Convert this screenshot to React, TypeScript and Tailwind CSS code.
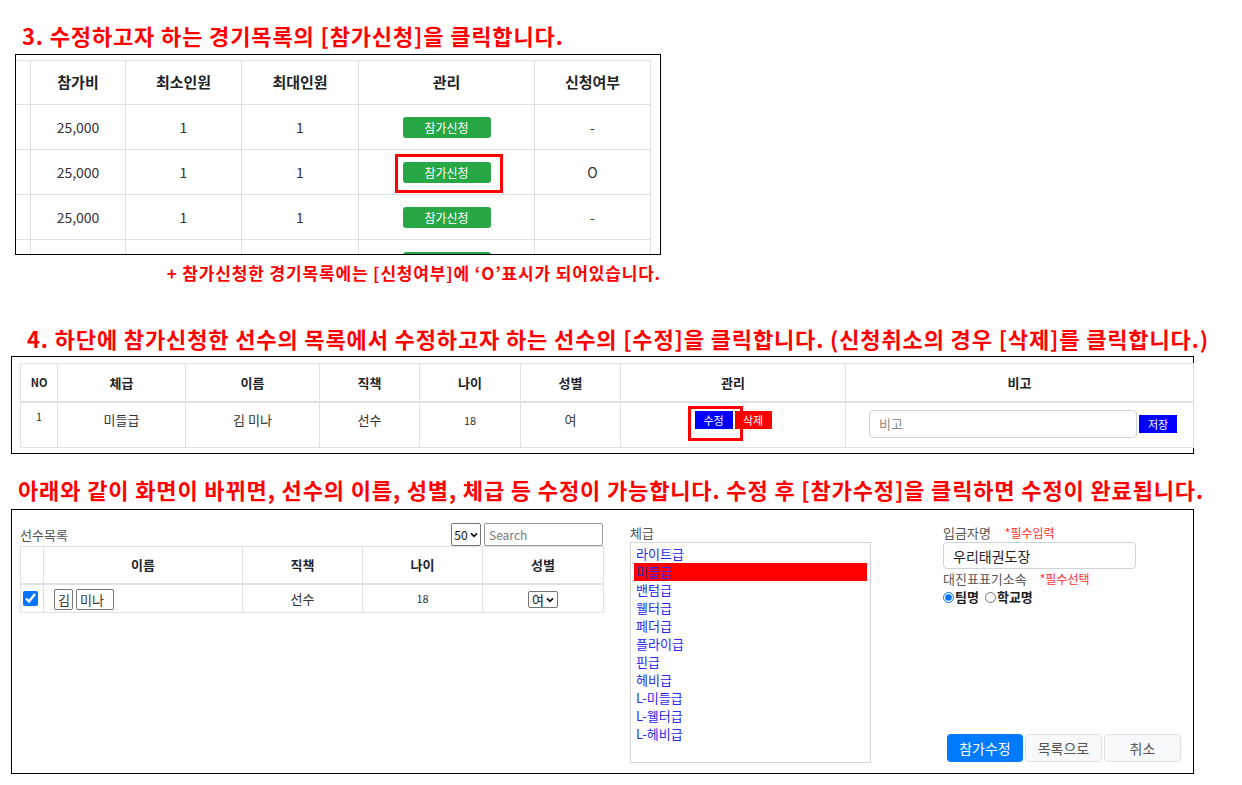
import type { FC, ReactNode } from 'react';

type Game = { fee: string; min: string; max: string; applied: string; focus?: boolean; cut?: boolean };

const games: Game[] = [
  { fee: '25,000', min: '1', max: '1', applied: '-' },
  { fee: '25,000', min: '1', max: '1', applied: 'O', focus: true },
  { fee: '25,000', min: '1', max: '1', applied: '-' },
  { fee: '', min: '', max: '', applied: '', cut: true },
];

const weights = ['라이트급', '미들급', '밴텀급', '웰터급', '페더급', '플라이급', '핀급', '헤비급', 'L-미들급', 'L-웰터급', 'L-헤비급'];

const Title: FC<{ className: string; children: ReactNode }> = ({ className, children }) => (
  <h2 className={`text-[22px] font-bold leading-[26px] tracking-[0.86px] text-[#ff0000] ${className}`}>{children}</h2>
);

const Chevron: FC = () => (
  <svg width="8" height="6" viewBox="0 0 8 6" className="ml-[2px]">
    <path d="M1 1.3 4 4.4 7 1.3" fill="none" stroke="#111" strokeWidth="1.7" />
  </svg>
);

// 경기목록 (참가신청 버튼)
const GameTable: FC = () => (
  <div className="ml-[15px] mt-[6px] h-[201px] w-[646px] overflow-hidden border border-black pt-[5px]">
    <table className="-ml-[20px] w-[654px] table-fixed border-collapse text-[14px] text-[#333]">
      <colgroup>
        <col className="w-[34px]" />
        <col className="w-[95px]" />
        <col className="w-[116px]" />
        <col className="w-[117px]" />
        <col className="w-[176px]" />
        <col className="w-[116px]" />
      </colgroup>
      <thead>
        <tr className="h-[44px] text-[15px] font-bold text-[#212529]">
          <th className="border border-[#dee2e6]" />
          <th className="border border-[#dee2e6]">참가비</th>
          <th className="border border-[#dee2e6]">최소인원</th>
          <th className="border border-[#dee2e6]">최대인원</th>
          <th className="border border-[#dee2e6]">관리</th>
          <th className="border border-[#dee2e6]">신청여부</th>
        </tr>
      </thead>
      <tbody>
        {games.map((g, i) => (
          <tr key={i} className="h-[45px] text-center">
            <td className="border border-[#dee2e6]" />
            <td className="border border-[#dee2e6]">{g.fee}</td>
            <td className="border border-[#dee2e6]">{g.min}</td>
            <td className="border border-[#dee2e6]">{g.max}</td>
            <td className="border border-[#dee2e6]">
              <span className="relative inline-flex align-middle">
                <span className="flex h-[21px] w-[88px] items-center justify-center rounded-[3px] bg-[#28a745] text-[12px] text-white">
                  {g.cut ? '' : '참가신청'}
                </span>
                {g.focus && <span className="absolute -bottom-[10px] -left-[8px] -right-[12px] -top-[8px] border-[3px] border-[#ff0000]" />}
              </span>
            </td>
            <td className="border border-[#dee2e6]">{g.applied}</td>
          </tr>
        ))}
      </tbody>
    </table>
  </div>
);

// 참가신청한 선수 목록
const EntryTable: FC = () => (
  <div className="ml-[11px] mt-[5px] h-[98px] w-[1183px] border border-black pl-[8px] pt-[6px]">
    <table className="w-[1173px] table-fixed border-collapse text-[13px] text-[#333]">
      <colgroup>
        <col className="w-[37px]" />
        <col className="w-[128px]" />
        <col className="w-[134px]" />
        <col className="w-[100px]" />
        <col className="w-[101px]" />
        <col className="w-[100px]" />
        <col className="w-[225px]" />
        <col className="w-[348px]" />
      </colgroup>
      <thead>
        <tr className="h-[38px] font-bold text-[#212529]">
          <th className="border border-b-2 border-[#dee2e6] text-[11px]">NO</th>
          <th className="border border-b-2 border-[#dee2e6]">체급</th>
          <th className="border border-b-2 border-[#dee2e6]">이름</th>
          <th className="border border-b-2 border-[#dee2e6]">직책</th>
          <th className="border border-b-2 border-[#dee2e6]">나이</th>
          <th className="border border-b-2 border-[#dee2e6]">성별</th>
          <th className="border border-b-2 border-[#dee2e6]">관리</th>
          <th className="border border-b-2 border-[#dee2e6]">비고</th>
        </tr>
      </thead>
      <tbody>
        <tr className="h-[46px] text-center align-top leading-[18px]">
          <td className="border border-[#dee2e6] pt-[4px] text-[11px]">1</td>
          <td className="border border-[#dee2e6] pt-[8px]">미들급</td>
          <td className="border border-[#dee2e6] pt-[8px]">김 미나</td>
          <td className="border border-[#dee2e6] pt-[8px]">선수</td>
          <td className="border border-[#dee2e6] pt-[8px] text-[11px]">18</td>
          <td className="border border-[#dee2e6] pt-[8px]">여</td>
          <td className="border border-[#dee2e6] pt-[8px]">
            <div className="flex justify-center gap-[2px]">
              <span className="relative">
                <span className="flex h-[18px] w-[38px] items-center justify-center bg-[#0000ff] text-[11px] text-white">수정</span>
                <span className="absolute -bottom-[12px] -left-[7px] -right-[10px] -top-[5px] border-[3px] border-[#ff0000]" />
              </span>
              <span className="flex h-[18px] w-[37px] items-center justify-center bg-[#ff0000] text-[11px] text-white">삭제</span>
            </div>
          </td>
          <td className="border border-[#dee2e6] pt-[7px]">
            <div className="flex items-center gap-[2px] pl-[23px]">
              <input
                placeholder="비고"
                className="h-[28px] w-[268px] rounded-[4px] border border-[#ced4da] px-[9px] text-[13px] placeholder:text-[#888]"
              />
              <span className="flex h-[18px] w-[38px] items-center justify-center bg-[#0000ff] text-[11px] text-white">저장</span>
            </div>
          </td>
        </tr>
      </tbody>
    </table>
  </div>
);

// 수정 화면
const EditPanel: FC = () => (
  <div className="ml-[11px] mt-[7px] flex h-[265px] w-[1183px] border border-black pl-[8px] text-[#333]">
    <div className="w-[583px] pt-[13px]">
      <div className="flex h-[23px] items-center justify-between">
        <span className="text-[13px] text-[#555]">선수목록</span>
        <div className="flex h-[23px] gap-[3px]">
          <span className="flex w-[30px] items-center justify-center rounded-[2px] border border-[#767676] text-[12px] text-[#111]">
            50
            <Chevron />
          </span>
          <input
            placeholder="Search"
            className="h-[23px] w-[119px] rounded-[2px] border border-[#999] px-[4px] text-[12px] placeholder:text-[#777]"
          />
        </div>
      </div>
      <table className="w-[583px] table-fixed border-collapse text-[13px]">
        <colgroup>
          <col className="w-[23px]" />
          <col className="w-[199px]" />
          <col className="w-[120px]" />
          <col className="w-[120px]" />
          <col className="w-[121px]" />
        </colgroup>
        <thead>
          <tr className="h-[37px] font-bold text-[#212529]">
            <th className="border border-b-2 border-[#dee2e6]" />
            <th className="border border-b-2 border-[#dee2e6]">이름</th>
            <th className="border border-b-2 border-[#dee2e6]">직책</th>
            <th className="border border-b-2 border-[#dee2e6]">나이</th>
            <th className="border border-b-2 border-[#dee2e6]">성별</th>
          </tr>
        </thead>
        <tbody>
          <tr className="h-[29px] text-center">
            <td className="border border-[#dee2e6] pl-[2px] text-left">
              <input type="checkbox" defaultChecked className="m-0 block h-[15px] w-[15px]" />
            </td>
            <td className="border border-[#dee2e6] pl-[10px] text-left">
              <div className="flex gap-[3px] pt-[2px]">
                <input defaultValue="김" className="h-[21px] w-[19px] rounded-[2px] border border-[#767676] px-[3px] text-[13px]" />
                <input defaultValue="미나" className="h-[21px] w-[38px] rounded-[2px] border border-[#767676] px-[3px] text-[13px]" />
              </div>
            </td>
            <td className="border border-[#dee2e6]">선수</td>
            <td className="border border-[#dee2e6] text-[11px]">18</td>
            <td className="border border-[#dee2e6]">
              <span className="inline-flex h-[17px] w-[30px] items-center justify-center rounded-[2px] border border-[#767676] align-middle text-[13px] text-[#111]">
                여
                <Chevron />
              </span>
            </td>
          </tr>
        </tbody>
      </table>
    </div>

    <div className="ml-[27px] w-[241px] pt-[14px]">
      <div className="h-[18px] text-[13px] leading-[18px] text-[#555]">체급</div>
      <div className="h-[221px] border border-[#d4d4d4] px-[3px] pt-[2px]">
        {weights.map((w) => (
          <div
            key={w}
            className={`h-[18px] pl-[2px] text-[13px] leading-[18px] text-[#2a2aee] ${w === '미들급' ? 'bg-[#ff0000]' : ''}`}
          >
            {w}
          </div>
        ))}
      </div>
    </div>

    <div className="ml-[72px] flex w-[238px] flex-col pb-[11px] pt-[14px]">
      <div className="flex h-[18px] items-center text-[13px] text-[#555]">
        입금자명<span className="ml-[14px] text-[12px] text-[#ff3030]">*필수입력</span>
      </div>
      <input
        defaultValue="우리태권도장"
        className="h-[27px] w-[193px] rounded-[4px] border border-[#ced4da] px-[9px] text-[14px] text-[#212529]"
      />
      <div className="mt-[1px] flex h-[18px] items-center text-[13px] text-[#555]">
        대진표표기소속<span className="ml-[13px] text-[12px] text-[#ff3030]">*필수선택</span>
      </div>
      <div className="flex h-[18px] items-center text-[13px] font-bold text-[#222]">
        <input type="radio" name="team" defaultChecked className="m-0 h-[11px] w-[11px]" />
        <span className="ml-[1px]">팀명</span>
        <input type="radio" name="team" className="ml-[6px] h-[11px] w-[11px]" />
        <span className="ml-[1px]">학교명</span>
      </div>
      <div className="mt-auto flex gap-[2px] pl-[4px] text-[14px]">
        <span className="flex h-[28px] w-[76px] items-center justify-center rounded-[4px] bg-[#007bff] text-white">참가수정</span>
        <span className="flex h-[28px] w-[77px] items-center justify-center rounded-[4px] border border-[#dee2e6] bg-[#f8f9fa] text-[#555]">목록으로</span>
        <span className="flex h-[28px] w-[77px] items-center justify-center rounded-[4px] border border-[#dee2e6] bg-[#f8f9fa] text-[#555]">취소</span>
      </div>
    </div>
  </div>
);

export default function App() {
  return (
    <div className="h-[785px] w-[1242px] overflow-hidden bg-white pt-[22px] font-['Noto_Sans_CJK_KR','Noto_Sans',sans-serif]">
      <Title className="ml-[22px]">3. 수정하고자 하는 경기목록의 [참가신청]을 클릭합니다.</Title>
      <GameTable />
      <p className="ml-[15px] mt-[7px] w-[646px] text-right text-[17px] font-bold leading-[22px] tracking-[0.85px] text-[#ff0000]">
        + 참가신청한 경기목록에는 [신청여부]에 ‘O’표시가 되어있습니다.
      </p>

      <Title className="ml-[27px] mt-[41px]">
        4. 하단에 참가신청한 선수의 목록에서 수정하고자 하는 선수의 [수정]을 클릭합니다. (신청취소의 경우 [삭제]를 클릭합니다.)
      </Title>
      <EntryTable />

      <Title className="ml-[18px] mt-[22px]">
        아래와 같이 화면이 바뀌면, 선수의 이름, 성별, 체급 등 수정이 가능합니다. 수정 후 [참가수정]을 클릭하면 수정이 완료됩니다.
      </Title>
      <EditPanel />
    </div>
  );
}
